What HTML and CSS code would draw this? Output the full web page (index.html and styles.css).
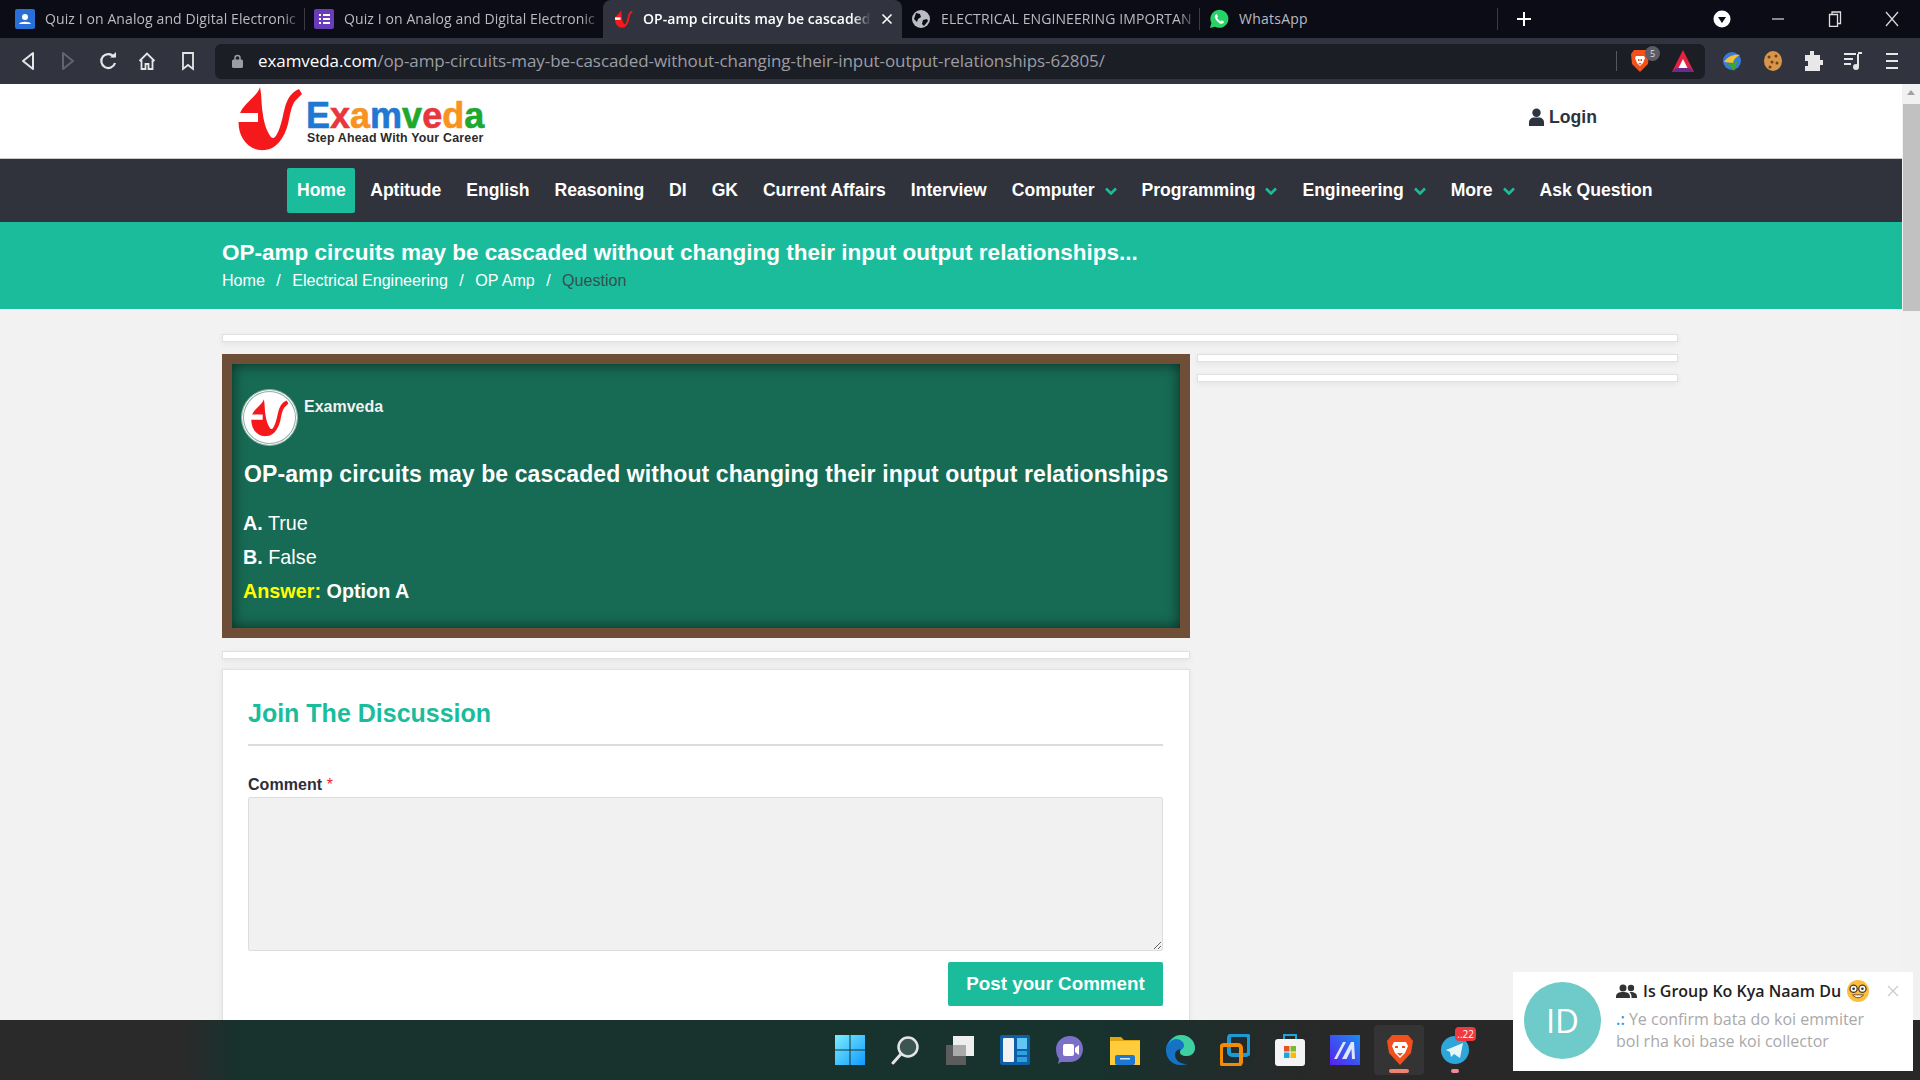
FILE: index.html
```html
<!DOCTYPE html>
<html lang="en">
<head>
<meta charset="utf-8">
<title>OP-amp circuits may be cascaded</title>
<link rel="stylesheet" href="styles.css">
</head>
<body>
<svg class="defs" width="0" height="0" aria-hidden="true">
  <defs>
    <symbol id="mark" viewBox="0 0 65 64">
      <path fill="#f5191c" d="M22 0C20 8 8 15 3 24C-1 32 0 44 5 52C10 60 18 64 27 63C38 62 46 52 50 37C52 28 53 20 57 14L64 7C63 5 62 4 61 2C54 5 50 10 47 20C45 28 43 40 39 47C37 51 35 52 33 50C29 45 26 36 25 28C23 18 24 9 22 0Z"/>
      <rect fill="#fff" x="0" y="26" width="20" height="9"/>
    </symbol>
  </defs>
</svg>

<div class="tabstrip">
  <div class="tab sep">
    <svg width="20" height="20" viewBox="0 0 20 20"><rect width="20" height="20" rx="2" fill="#2a6fd6"/><circle cx="10" cy="8" r="3" fill="#fff"/><path d="M4 15c1-3 11-3 12 0z" fill="#fff"/></svg>
    <span class="tab-t">Quiz I on Analog and Digital Electronic</span>
  </div>
  <div class="tab">
    <svg width="20" height="20" viewBox="0 0 20 20"><rect width="20" height="20" rx="2" fill="#6a3db8"/><path d="M5 5h2v2H5zM9 5h7v2H9zM5 9h2v2H5zM9 9h7v2H9zM5 13h2v2H5zM9 13h7v2H9z" fill="#fff"/></svg>
    <span class="tab-t">Quiz I on Analog and Digital Electronic</span>
  </div>
  <div class="tab active">
    <svg width="18" height="18"><use href="#mark"/></svg>
    <span class="tab-t">OP-amp circuits may be cascaded</span>
    <svg class="tab-x" width="12" height="12" viewBox="0 0 12 12"><path d="M1.5 1.5l9 9M10.5 1.5l-9 9" stroke="#fff" stroke-width="1.6"/></svg>
  </div>
  <div class="tab sep">
    <svg width="20" height="20" viewBox="0 0 20 20"><circle cx="10" cy="10" r="9" fill="#b9bcc2"/><path d="M5 4l4 1 1 3-3 2-1 3-3-3zM12 11l4-1 1 2-4 5-2-2z" fill="#0c0c17"/></svg>
    <span class="tab-t">ELECTRICAL ENGINEERING IMPORTAN</span>
  </div>
  <div class="tab sep">
    <svg width="20" height="20" viewBox="0 0 20 20"><path d="M1 19l1.400-5A9 9 0 1 1 6 17.700z" fill="#25d366"/><path d="M7 5.500c-2 1-1.500 3.500 1 6.500s5 3.500 6.500 2l.5-1.500-2.500-1.300-1 1c-1.500-.5-2.800-2-3.400-3.400l.9-1L7.800 5z" fill="#fff"/></svg>
    <span class="tab-t tab-t-plain">WhatsApp</span>
  </div>
  <svg class="newtab" width="16" height="16" viewBox="0 0 16 16"><path d="M8 1v14M1 8h14" stroke="#fff" stroke-width="2"/></svg>
  <div class="winctl">
    <svg width="18" height="18" viewBox="0 0 18 18"><circle cx="9" cy="9" r="8.500" fill="#fff"/><path d="M5 7h8l-4 6z" fill="#0c0c17"/></svg>
    <svg width="14" height="14" viewBox="0 0 14 14"><path d="M1 7h12" stroke="#ddd" stroke-width="1.200"/></svg>
    <svg width="14" height="16" viewBox="0 0 14 16"><path d="M1.500 3.500h8v12h-8zM4 3.500V1h8.500v11.500h-3" fill="none" stroke="#ddd" stroke-width="1.300"/></svg>
    <svg width="14" height="16" viewBox="0 0 14 16"><path d="M1 1l12 14M13 1L1 15" stroke="#ddd" stroke-width="1.200"/></svg>
  </div>
</div>

<div class="toolbar">
  <div class="nav-btns">
    <svg width="14" height="20" viewBox="0 0 14 20"><path d="M12 2v16L2 10z" fill="none" stroke="#e6e6e6" stroke-width="2" stroke-linejoin="round"/></svg>
    <svg width="14" height="20" viewBox="0 0 14 20"><path d="M2 2v16l10-8z" fill="none" stroke="#62656d" stroke-width="2" stroke-linejoin="round"/></svg>
    <svg width="18" height="20" viewBox="0 0 18 20"><path d="M15 6a7 7 0 1 0 1 6" fill="none" stroke="#e6e6e6" stroke-width="2.200"/><path d="M11 6.500h6V1z" fill="#e6e6e6"/></svg>
    <svg width="18" height="20" viewBox="0 0 18 20"><path d="M1.500 10L9 2.500l7.500 7.500M3.500 9v9h4v-5h3v5h4V9" fill="none" stroke="#e6e6e6" stroke-width="1.800"/></svg>
    <svg width="14" height="20" viewBox="0 0 14 20"><path d="M2 2h10v16l-5-4-5 4z" fill="none" stroke="#e6e6e6" stroke-width="1.800"/></svg>
  </div>
  <div class="urlbar">
    <svg class="lock" width="11" height="14" viewBox="0 0 11 14"><path d="M3 6V4a2.500 2.500 0 0 1 5 0v2" fill="none" stroke="#9a9da3" stroke-width="1.500"/><rect y="5.500" width="11" height="8.500" rx="1.500" fill="#9a9da3"/></svg>
    <span class="url"><span class="url-host">examveda.com</span>/op-amp-circuits-may-be-cascaded-without-changing-their-input-output-relationships-62805/</span>
    <span class="url-div"></span>
    <span class="shield">
      <svg width="20" height="24" viewBox="0 0 20 24"><path d="M4 1h12l3 4-1 10-8 8-8-8L1 5z" fill="#f1511b"/><path d="M6 7h8l1 2-2 5-3 3-3-3-2-5z" fill="#fff"/><path d="M8 10h1.500v2H8zM10.500 10H12v2h-1.500zM8.500 14h3L10 16z" fill="#f1511b"/></svg>
      <span class="shield-n">5</span>
    </span>
    <svg class="bat" width="24" height="24" viewBox="0 0 24 24"><path d="M12 1l11 22H1z" fill="#e5223f"/><path d="M5 19l-4 4h22l-4-4z" fill="#6a2a8e"/><path d="M12 10l4.500 9h-9z" fill="#fff"/></svg>
  </div>
  <div class="ext">
    <svg width="22" height="24" viewBox="0 0 22 24"><circle cx="11" cy="12" r="9" fill="#3a7bd5"/><path d="M3 13c4-6 10-8 16-7-4 2-6 4-7 8z" fill="#f3c22c"/><path d="M3 14c3 2 9 2 14-3l-4 11-4-5z" fill="#3aa635"/></svg>
    <svg width="20" height="24" viewBox="0 0 20 24"><ellipse cx="10" cy="12" rx="9" ry="10" fill="#d9964a"/><circle cx="6" cy="8" r="1.500" fill="#6d4217"/><circle cx="13" cy="7" r="1.500" fill="#6d4217"/><circle cx="9" cy="13" r="1.500" fill="#6d4217"/><circle cx="14" cy="14" r="1.500" fill="#6d4217"/><circle cx="7" cy="18" r="1.500" fill="#6d4217"/></svg>
    <svg width="20" height="22" viewBox="0 0 20 22"><path d="M7 1h4v4h6v5h3v5h-3v6H2v-5h3v-5H2V5h5z" fill="#e8e8e8"/></svg>
    <svg width="20" height="20" viewBox="0 0 20 20"><path d="M1 3h12M1 8h9M1 13h7" stroke="#e6e6e6" stroke-width="2"/><path d="M15 3v12" stroke="#e6e6e6" stroke-width="2"/><path d="M15 2h4" stroke="#e6e6e6" stroke-width="2"/><circle cx="13" cy="16" r="3" fill="#e6e6e6"/></svg>
    <svg width="14" height="18" viewBox="0 0 14 18"><path d="M1 2h12M1 9h12M1 16h12" stroke="#e6e6e6" stroke-width="2"/></svg>
  </div>
</div>

<div class="viewport">
  <div class="page">
    <header class="site-head">
      <a class="logo">
        <svg class="logo-mark" width="65" height="64"><use href="#mark"/></svg>
        <span class="logo-text">
          <span class="logo-name"><i class="c-blue">E</i><i class="c-red">x</i><i class="c-orange">a</i><i class="c-blue">m</i><i class="c-green">v</i><i class="c-red">e</i><i class="c-orange">d</i><i class="c-green">a</i></span>
          <span class="logo-tag">Step Ahead With Your Career</span>
        </span>
      </a>
      <a class="login">
        <svg width="15" height="18" viewBox="0 0 16 19"><circle cx="8" cy="5" r="4.500" fill="#2d3340"/><path d="M0 19v-4c0-3 3-5 5-5h6c2 0 5 2 5 5v4z" fill="#2d3340"/></svg>
        Login
      </a>
    </header>

    <nav class="mainnav">
      <a class="nav-i nav-home">Home</a>
      <a class="nav-i">Aptitude</a>
      <a class="nav-i">English</a>
      <a class="nav-i">Reasoning</a>
      <a class="nav-i">DI</a>
      <a class="nav-i">GK</a>
      <a class="nav-i">Current Affairs</a>
      <a class="nav-i">Interview</a>
      <a class="nav-i">Computer<svg class="chev" width="12" height="8" viewBox="0 0 12 8"><path d="M1 1.500L6 6.500l5-5" fill="none" stroke="#1abc9c" stroke-width="2.600"/></svg></a>
      <a class="nav-i">Programming<svg class="chev" width="12" height="8" viewBox="0 0 12 8"><path d="M1 1.500L6 6.500l5-5" fill="none" stroke="#1abc9c" stroke-width="2.600"/></svg></a>
      <a class="nav-i">Engineering<svg class="chev" width="12" height="8" viewBox="0 0 12 8"><path d="M1 1.500L6 6.500l5-5" fill="none" stroke="#1abc9c" stroke-width="2.600"/></svg></a>
      <a class="nav-i">More<svg class="chev" width="12" height="8" viewBox="0 0 12 8"><path d="M1 1.500L6 6.500l5-5" fill="none" stroke="#1abc9c" stroke-width="2.600"/></svg></a>
      <a class="nav-i">Ask Question</a>
    </nav>

    <section class="banner">
      <h1 class="banner-t">OP-amp circuits may be cascaded without changing their input output relationships...</h1>
      <div class="crumbs">
        <a>Home</a><span class="slash">/</span><a>Electrical Engineering</a><span class="slash">/</span><a>OP Amp</a><span class="slash">/</span><span class="crumb-cur">Question</span>
      </div>
    </section>

    <main class="content">
      <div class="thin thin-top"></div>
      <div class="cols">
        <div class="col-main">
          <article class="board">
            <div class="board-head">
              <span class="board-av"><svg width="38" height="38"><use href="#mark"/></svg></span>
              <span class="board-name">Examveda</span>
            </div>
            <h2 class="board-q">OP-amp circuits may be cascaded without changing their input output relationships</h2>
            <p class="opt"><b>A.</b> True</p>
            <p class="opt"><b>B.</b> False</p>
            <p class="opt"><b class="ans">Answer:</b> <b>Option A</b></p>
          </article>
          <div class="thin thin-mid"></div>
          <section class="disc">
            <h3 class="disc-t">Join The Discussion</h3>
            <label class="disc-l">Comment <span class="req">*</span></label>
            <textarea class="disc-ta"></textarea>
            <div class="disc-foot"><button class="post">Post your Comment</button></div>
          </section>
        </div>
        <aside class="col-side">
          <div class="thin"></div>
          <div class="thin"></div>
        </aside>
      </div>
    </main>
  </div>
  <div class="scrollbar">
    <span class="sb-up"></span>
    <span class="sb-thumb"></span>
  </div>
</div>

<footer class="taskbar">
  <span class="tb"><svg width="30" height="30" viewBox="0 0 30 30"><defs><linearGradient id="w" x1="0" y1="0" x2="1" y2="1"><stop offset="0" stop-color="#7cecff"/><stop offset="1" stop-color="#0f9bff"/></linearGradient></defs><path fill="url(#w)" d="M0 0h14.500v14.500H0zM15.500 0H30v14.500H15.500zM0 15.500h14.500V30H0zM15.500 15.500H30V30H15.500z"/></svg></span>
  <span class="tb"><svg width="30" height="30" viewBox="0 0 30 30"><circle cx="18" cy="12" r="9.500" fill="#3c5550" stroke="#e4e4e4" stroke-width="2.500"/><path d="M11 19l-8 9" stroke="#e4e4e4" stroke-width="3" stroke-linecap="round"/></svg></span>
  <span class="tb"><svg width="30" height="30" viewBox="0 0 30 30"><rect x="1" y="10" width="20" height="20" fill="#5c5c5c"/><rect x="8" y="1" width="21" height="20" fill="#eee"/><rect x="8" y="10" width="13" height="11" fill="#aaa"/></svg></span>
  <span class="tb"><svg width="30" height="30" viewBox="0 0 30 30"><rect width="30" height="30" rx="2" fill="#0f5ea8"/><rect x="3" y="3" width="11" height="24" rx="1" fill="#f2f2f2"/><rect x="17" y="3" width="10" height="11" fill="#62c6f2"/><rect x="17" y="16" width="10" height="4" fill="#2ea0dc"/><rect x="17" y="22" width="10" height="5" fill="#2ea0dc"/></svg></span>
  <span class="tb"><svg width="30" height="30" viewBox="0 0 30 30"><path d="M15 1c8 0 13 6 13 13s-5 13-13 13H6l-3 2 1-5C2 21 1 18 1 14 1 7 7 1 15 1z" fill="#7b6fc8"/><rect x="8" y="9" width="11" height="12" rx="2" fill="#fff"/><path d="M20 13l4-3v10l-4-3z" fill="#fff"/></svg></span>
  <span class="tb"><svg width="30" height="30" viewBox="0 0 30 30"><path d="M0 2h11l3 3h16v6H0z" fill="#e2a50e"/><rect y="6" width="30" height="24" fill="#ffcd3c"/><rect x="5" y="20" width="20" height="10" rx="2" fill="#1e78d0"/><rect x="10" y="23" width="10" height="1.500" fill="#cfe6ff"/></svg></span>
  <span class="tb"><svg width="30" height="30" viewBox="0 0 30 30"><path d="M1 13C3 4 10 0 16 0c8 0 14 6 14 13 0 5-4 8-8 8-5 0-7-2-7-4 0-1 .5-2 1-2.500C12 14 10 17 10 20c0 5 5 9 11 9 1 0 2 0 3-.5C21 30 18 30 15 30 7 30 0 23 1 13z" fill="#1572c4"/><path d="M3 10C6 3 11 0 16 0c8 0 14 6 14 13 0 5-4 8-8 8-5 0-7-2-7-4 0-3 4-2 4-7 0-3-4-6-8-6-3 0-6 2-8 6z" fill="#3fd0a0"/></svg></span>
  <span class="tb"><svg width="30" height="32" viewBox="0 0 30 32"><rect x="9" y="1" width="20" height="20" rx="3" fill="none" stroke="#1b9ad6" stroke-width="4"/><rect x="1" y="11" width="20" height="20" rx="3" fill="none" stroke="#f58a07" stroke-width="4"/></svg></span>
  <span class="tb"><svg width="30" height="32" viewBox="0 0 30 32"><path d="M9 5V1h12v4" fill="none" stroke="#1ca6df" stroke-width="2"/><rect y="5" width="30" height="27" rx="3" fill="#f4f4f4"/><rect x="9" y="12" width="5.500" height="5.500" fill="#e9502a"/><rect x="15.500" y="12" width="5.500" height="5.500" fill="#7cb82f"/><rect x="9" y="18.500" width="5.500" height="5.500" fill="#1ca6df"/><rect x="15.500" y="18.500" width="5.500" height="5.500" fill="#ffb900"/></svg></span>
  <span class="tb"><svg width="30" height="30" viewBox="0 0 30 30"><defs><linearGradient id="p" x1="0" y1="1" x2="1" y2="0"><stop offset="0" stop-color="#5a20f0"/><stop offset="1" stop-color="#1a8cf0"/></linearGradient></defs><rect width="30" height="30" fill="url(#p)"/><path d="M4 24L13 7h3L7 24zM12 24L21 7h3l1 17h-3l-.5-10-5 10z" fill="#dfe6ff"/></svg></span>
  <span class="tb tb-on"><span class="tb-box"></span><svg class="tb-ic" width="28" height="32" viewBox="0 0 28 32"><path d="M6 1h16l5 6-2 12-11 12L3 19 1 7z" fill="#f1501e"/><path d="M8 8h12l2 4-3 7-5 5-5-5-3-7z" fill="#fff"/><path d="M9 12h3v2H9zM16 12h3v2h-3zM11 19h6l-3 3z" fill="#f1501e"/></svg><i class="tb-mark"></i></span>
  <span class="tb tb-tg"><svg width="30" height="30" viewBox="0 0 30 30"><circle cx="15" cy="15" r="14" fill="#2ea6da"/><path d="M6 15l17-7-3 15-6-4-3 3-1-5z" fill="#e6f5fc"/></svg><b class="tb-badge">..22</b><i class="tb-dot"></i></span>
</footer>

<aside class="toast">
  <span class="toast-av">ID</span>
  <div class="toast-body">
    <div class="toast-t">
      <svg width="21" height="14" viewBox="0 0 21 14"><circle cx="7" cy="4" r="3.500" fill="#333"/><circle cx="15" cy="4" r="3.200" fill="#333"/><path d="M0 13c0-4 3-5 7-5s7 1 7 5v1H0zM15.500 14v-1c0-2-.5-3.500-2-5 4-.5 7.500 1 7.500 4.500V14z" fill="#333"/></svg>
      <span class="toast-name">Is Group Ko Kya Naam Du</span>
      <svg width="22" height="22" viewBox="0 0 20 20"><circle cx="10" cy="10" r="10" fill="#fbbf3c"/><circle cx="6" cy="8" r="3.300" fill="#fff" stroke="#5a3a17" stroke-width="1.200"/><circle cx="14" cy="8" r="3.300" fill="#fff" stroke="#5a3a17" stroke-width="1.200"/><circle cx="6" cy="8" r="1.200" fill="#333"/><circle cx="14" cy="8" r="1.200" fill="#333"/><path d="M5 13.500c3 3.500 7 3.500 10 0z" fill="#fff" stroke="#5a3a17" stroke-width=".8"/></svg>
    </div>
    <p class="toast-m"><span class="toast-dots">.:</span> Ye confirm bata do koi emmiter bol rha koi base koi collector</p>
  </div>
  <svg class="toast-x" width="12" height="12" viewBox="0 0 12 12"><path d="M1 1l10 10M11 1L1 11" stroke="#ccc" stroke-width="1.400"/></svg>
</aside>
</body>
</html>
```

FILE: styles.css
```css
* { box-sizing: border-box; }
html, body { margin: 0; height: 100%; overflow: hidden; }
body {
  width: 1920px; height: 1080px;
  display: flex; flex-direction: column;
  font-family: "Liberation Sans", Arial, sans-serif;
  background: #f2f2f2;
  position: relative;
}
.defs { position: absolute; }
svg { flex: none; display: block; }
i { font-style: normal; }

/* Browser tabs */
.tabstrip { height: 38px; background: #0c0c17; display: flex; align-items: stretch; flex: none; }
.tab { width: 298px; display: flex; align-items: center; gap: 10px; padding: 0 0 0 9px; position: relative; color: #b9bbc0; font: 14px "Open Sans", sans-serif; }
.tab:first-child { width: 305px; padding-left: 15px; }
.tab.sep::after { content: ""; position: absolute; right: 0; top: 8px; bottom: 8px; width: 1px; background: #3a3b45; }
.tab.active { width: 299px; background: #31343f; color: #fff; border-radius: 8px 8px 0 0; font-weight: 600; padding-left: 12px; }
.tab-t { width: 258px; margin-top: -2px; white-space: nowrap; overflow: hidden; letter-spacing: .1px; -webkit-mask-image: linear-gradient(90deg, #000 92%, transparent); mask-image: linear-gradient(90deg, #000 92%, transparent); }
.tab-t-plain { -webkit-mask-image: none; mask-image: none; letter-spacing: .25px; }
.active .tab-t { width: 228px; letter-spacing: .05px; }
.tab-x { margin-left: 0; }
.newtab { margin: 11px 0 0 18px; }
.winctl { margin-left: 181px; display: flex; align-items: center; }
.winctl svg:nth-child(2) { margin-left: 40px; }
.winctl svg:nth-child(3) { margin-left: 43px; }
.winctl svg:nth-child(4) { margin-left: 43px; }

/* Browser toolbar */
.toolbar { height: 46px; background: #31343f; flex: none; display: flex; align-items: center; }
.nav-btns { width: 215px; display: flex; align-items: center; padding-left: 21px; }
.nav-btns svg:nth-child(2) { margin-left: 26px; }
.nav-btns svg:nth-child(3) { margin-left: 24px; }
.nav-btns svg:nth-child(4) { margin-left: 21px; }
.nav-btns svg:nth-child(5) { margin-left: 25px; }
.urlbar { width: 1490px; height: 35px; background: #1c1e26; border-radius: 6px; display: flex; align-items: center; padding-left: 17px; color: #9a9da3; }
.lock { margin-right: 15px; }
.url { font: 17px "Open Sans", sans-serif; letter-spacing: -.07px; margin-top: -2px; white-space: nowrap; width: 1358px; overflow: hidden; }
.url-host { color: #fff; }
.url-div { width: 1px; height: 20px; background: #55575f; }
.shield { position: relative; margin-left: 13px; }
.shield-n { position: absolute; left: 15px; top: -3px; width: 15px; height: 15px; border-radius: 50%; background: #5a5c66; color: #ddd; font: 9px/15px "Open Sans", sans-serif; text-align: center; }
.bat { margin-left: 21px; }
.ext { display: flex; align-items: center; padding-left: 16px; gap: 20px; }
.ext svg:last-child { margin-left: 2px; }

/* Viewport */
.viewport { flex: 1; min-height: 0; display: flex; }
.page { width: 1902px; overflow: hidden; background: #f2f2f2; }
.scrollbar { width: 18px; background: #f1f1f1; display: flex; flex-direction: column; align-items: center; }
.sb-up { margin-top: 6px; border: 4px solid transparent; border-bottom: 5px solid #a3a3a3; border-top: 0; }
.sb-thumb { width: 17px; height: 207px; background: #c1c1c1; margin-top: 9px; }

/* Site header */
.site-head { height: 75px; background: #fff; border-bottom: 1px solid #c9c9c9; display: flex; align-items: center; justify-content: space-between; padding: 0 305px 0 238px; }
.logo { display: flex; height: 74px; align-items: flex-start; }
.logo-mark { margin-top: 3px; margin-right: 3px; }
.logo-text { display: flex; flex-direction: column; padding-top: 15px; }
.logo-name { font-size: 36px; font-weight: 700; line-height: 33px; -webkit-text-stroke: .6px; }
.c-blue { color: #1f78d1; } .c-red { color: #e8363f; } .c-orange { color: #f7931e; } .c-green { color: #1ea82f; }
.logo-tag { font-size: 12.400px; font-weight: 700; color: #2b2b2b; line-height: 13px; margin-left: 1px; white-space: nowrap; letter-spacing: .2px; }
.login { display: flex; align-items: center; gap: 5px; font-size: 17.600px; font-weight: 700; color: #2d3340; margin-top: -8px; }

/* Main nav */
.mainnav { height: 63px; background: #30333c; display: flex; align-items: center; padding-left: 287px; }
.nav-i { display: flex; align-items: center; height: 45px; padding: 0 12.500px; color: #fff; font-size: 17.600px; font-weight: 700; letter-spacing: -.04px; }
.nav-home { background: #1abc9c; border-radius: 2px; padding: 0 9px 0 10px; margin-right: 3px; }
.chev { margin-left: 10px; }

/* Banner */
.banner { height: 87px; background: #1abc9c; padding: 18px 0 0 222px; }
.banner-t { margin: 0; font-size: 22.520px; line-height: 26px; color: #fff; font-weight: 700; }
.crumbs { margin-top: 4px; font-size: 16.100px; line-height: 20px; color: #fff; display: flex; }
.slash { margin: 0 11.400px; }
.crumb-cur { color: #35504c; }

/* Content */
.content { margin: 25px 0 0 222px; width: 1456px; }
.thin { height: 8px; background: #fff; border: 1px solid #e0e0e0; box-shadow: 0 2px 6px rgba(0,0,0,.06); }
.thin-top { margin-bottom: 12px; }
.cols { display: flex; gap: 7px; }
.col-main { width: 968px; }
.col-side { width: 481px; display: flex; flex-direction: column; gap: 12px; }
.board { height: 284px; border: 10px solid #6f4e37; background: #176a53; box-shadow: inset 0 0 14px rgba(0,0,0,.6); padding: 25px 11px 0 12px; color: #fff; }
.board-head { display: flex; align-items: flex-start; margin-left: -3px; }
.board-av { width: 57px; height: 57px; border-radius: 50%; background: #fff; box-shadow: 0 0 0 1px #fff inset, 0 0 0 2px #8eb0a5 inset; border: 1px solid #8eb0a5; display: flex; align-items: center; justify-content: center; }
.board-name { margin: 8px 0 0 6px; font-size: 16px; line-height: 20px; font-weight: 700; color: #f1f1f1; }
.board-q { margin: 14px 0 23px; font-size: 23px; line-height: 28px; font-weight: 700; white-space: nowrap; letter-spacing: .1px; }
.opt { margin: 0 0 10px -1px; font-size: 19.800px; line-height: 24px; }
.ans { color: #ff0; }
.thin-mid { margin: 13px 0 10px; }
.disc { background: #fff; border: 1px solid #e0e0e0; padding: 28px 26px 30px 25px; box-shadow: 0 0 6px rgba(0,0,0,.06); }
.disc-t { margin: 0; font-size: 25px; line-height: 30px; color: #1abc9c; font-weight: 700; padding-bottom: 16px; border-bottom: 2px solid #dcdcdc; }
.disc-l { display: block; margin-top: 29px; font-size: 16px; line-height: 20px; font-weight: 700; color: #2d2d3a; letter-spacing: .05px; }
.req { color: #f01c2c; font-weight: 400; }
.disc-ta { display: block; width: 100%; height: 154px; margin-top: 2px; background: #f1f1f1; border: 1px solid #ddd; border-radius: 2px; }
.disc-foot { display: flex; justify-content: flex-end; margin-top: 11px; }
.post { width: 215px; height: 44px; border: 0; border-radius: 2px; background: #1abc9c; color: #fff; font: 700 18.800px "Liberation Sans", sans-serif; }

/* Windows taskbar */
.taskbar { height: 60px; flex: none; display: flex; align-items: center; padding-left: 822px; background: linear-gradient(90deg, #2a2a2a 0, #2a2a2a 180px, #18322e 240px, #18322e 1100px, #282828 1320px); }
.tb { width: 55px; height: 50px; display: flex; align-items: center; justify-content: center; position: relative; }
.tb-box { position: absolute; left: 2px; right: 3px; top: 0; bottom: 0; background: rgba(255,255,255,.06); border-radius: 4px; }
.tb-ic { position: relative; }
.tb-mark { position: absolute; bottom: 2px; left: 17px; width: 20px; height: 4px; border-radius: 2px; background: #f08272; }
.tb-dot { position: absolute; bottom: 2px; left: 24px; width: 8px; height: 4px; border-radius: 2px; background: #f08a96; }
.tb-badge { position: absolute; top: 2px; right: 6px; height: 14px; padding: 0 2px; border-radius: 4px; background: #f0393e; color: #fff; font: 10px/14px "Open Sans", sans-serif; }

/* Notification */
.toast { position: absolute; left: 1513px; top: 972px; width: 400px; height: 99px; background: #fff; display: flex; padding: 10px 10px 10px 11px; }
.toast-av { width: 77px; height: 77px; border-radius: 50%; background: #6fcaca; color: #fff; font: 33px/77px "Open Sans", sans-serif; text-align: center; flex: none; }
.toast-body { margin-left: 15px; font-family: "Open Sans", sans-serif; }
.toast-t { display: flex; align-items: center; height: 20px; margin-top: -1px; }
.toast-name { margin: 0 6px 0 6px; font-size: 16px; font-weight: 600; color: #222; white-space: nowrap; }
.toast-m { margin: 7px 0 0; width: 270px; font-size: 16px; line-height: 22px; color: #a9a9a9; }
.toast-dots { color: #2a9fe0; font-weight: 600; }
.toast-x { position: absolute; right: 14px; top: 13px; }
```
